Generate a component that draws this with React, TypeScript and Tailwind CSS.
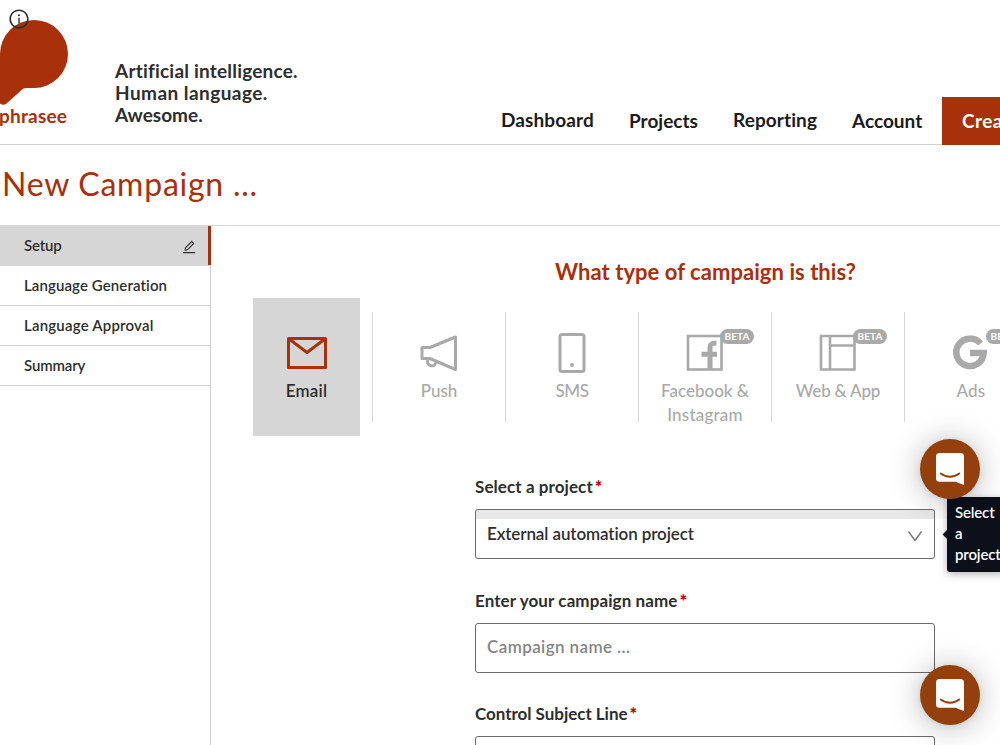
import type { ReactNode } from "react";
import { AiOutlineEdit, AiOutlineInfoCircle } from "react-icons/ai";

function Logo() {
  return (
    <div className="relative h-full w-[68px] shrink-0">
      <svg className="absolute left-0 top-5" width="68" height="86" viewBox="0 0 68 86" fill="#a8300a">
        <path d="M34 0a34 34 0 0 1 0 68h-7c-3 0-4 .6-6.500 3L6.500 83.500C4.500 85.300 2 85 0 83.500V34A34 34 0 0 1 34 0Z" />
      </svg>
      <AiOutlineInfoCircle className="absolute left-[8px] top-[8px] text-[#2e2e2e]" size={22} />
      <div className="absolute -left-px top-[104px] text-[19px] leading-6 font-bold tracking-[0.2px] text-[#a8300a]">phrasee</div>
    </div>
  );
}

function Beta() {
  return (
    <span className="absolute left-[81px] top-[17px] h-[15px] w-[34px] rounded-full bg-[#a9a9a9] text-center text-[10px] leading-[15px] font-bold tracking-[0.1px] text-white">
      BETA
    </span>
  );
}

function Channel({ icon, beta, children }: { icon: ReactNode; beta?: boolean; children: ReactNode }) {
  return (
    <div className="relative mt-[14px] h-[110px] w-[133px] shrink-0 border-l border-[#d6d6d6] pt-5 text-center text-[17px] leading-6 font-medium text-[#a9a9a9]">
      <div className="mb-[5px] flex h-[42px] justify-center">{icon}</div>
      {beta && <Beta />}
      {children}
    </div>
  );
}

function Label({ children, className }: { children: ReactNode; className: string }) {
  return (
    <div className={`flex h-6 items-center text-[17px] leading-6 font-bold text-[#2e2e2e] ${className}`}>
      <span className="-mt-[2px]">{children}</span>
      <span className="ml-[2px] -mt-[2px] text-[18px] font-black tracking-normal text-[#a80f0a]">*</span>
    </div>
  );
}

function ChatButton() {
  return (
    <div className="flex size-[60px] items-center justify-center rounded-full bg-[#94400c] shadow-[0_1px_6px_rgba(0,0,0,0.08),0_2px_32px_rgba(0,0,0,0.28)]">
      <svg width="28" height="32" viewBox="0 0 28 32">
        <path d="M3.500 0h21A3.500 3.500 0 0 1 28 3.500V32c0 0-4.500-1.300-8-3.200H3.500A3.500 3.500 0 0 1 0 25.300V3.500A3.500 3.500 0 0 1 3.500 0Z" fill="#fff" />
        <path d="M4.700 20.500c5.600 4.300 13 4.300 18.600 0" fill="none" stroke="#94400c" strokeWidth="1.800" strokeLinecap="round" />
      </svg>
    </div>
  );
}

const iconProps = { width: 40, height: 42, viewBox: "0 0 40 42", fill: "none", stroke: "#a9a9a9", strokeWidth: 3 };

export default function App() {
  return (
    <div className="relative h-[745px] w-[1000px] overflow-hidden bg-white font-['Lato',sans-serif] text-[#2e2e2e]">
      <header className="flex h-[145px] border-b border-[#cfcfcf]">
        <Logo />
        <div className="ml-[47px] w-[386px] shrink-0 pt-[60px] text-[19px] leading-[22px] font-bold">
          <div className="tracking-[0.2px]">Artificial intelligence.</div>
          <div className="tracking-[0.45px]">Human language.</div>
          <div>Awesome.</div>
        </div>
        <nav className="-mb-px flex shrink-0 whitespace-nowrap text-[19px] leading-6 font-bold text-[#1c1c1c]">
          <a className="w-[128px] pt-[108px] tracking-[0.1px]">Dashboard</a>
          <a className="w-[104px] pt-[109px]">Projects</a>
          <a className="w-[119px] pt-[108px] tracking-[0.1px]">Reporting</a>
          <a className="w-[90px] pt-[109px]">Account</a>
          <a className="mt-[97px] h-12 w-[120px] bg-[#a8300a] pl-5 pt-3 tracking-[0.4px] text-white">Create</a>
        </nav>
      </header>

      <h1 className="h-20 pl-[2px] pt-[15px] text-[32px] leading-[48px] font-normal tracking-[0.75px] text-[#a8300a]">New Campaign ...</h1>

      <div className="flex h-[520px] border-t border-[#d6d6d6]">
        <aside className="w-[211px] shrink-0 border-r border-[#d0d0d0] text-[15px] font-semibold">
          <div className="-mr-px flex h-10 items-center justify-between border-b border-[#d6d6d6] bg-[#d6d6d6]">
            <span className="pl-6 tracking-[-0.2px]">Setup</span>
            <div className="flex h-[39px] items-center border-r-[3px] border-[#a8300a] pr-[11px] pt-[2px]">
              <AiOutlineEdit size={16} />
            </div>
          </div>
          <div className="h-10 border-b border-[#d0d0d0] pl-6 leading-[38px] tracking-[0.1px]">Language Generation</div>
          <div className="h-10 border-b border-[#d0d0d0] pl-6 leading-[38px] tracking-[0.2px]">Language Approval</div>
          <div className="h-10 border-b border-[#d0d0d0] pl-6 leading-[38px] tracking-[-0.15px]">Summary</div>
        </aside>

        <main className="w-[989px] shrink-0">
          <h2 className="mt-[30px] text-center text-[22px] leading-8 font-bold tracking-[0.05px] text-[#a8300a]">What type of campaign is this?</h2>

          <div className="mt-[10px] flex pl-[42px]">
            <div className="mr-3 h-[138px] w-[107px] shrink-0 bg-[#d6d6d6] pt-[34px] text-center text-[17px] leading-6 font-semibold tracking-[0.2px]">
              <div className="mb-[5px] flex h-[42px] justify-center">
                <svg {...iconProps} stroke="#a8300a" strokeLinejoin="round">
                  <path d="M1.500 6.500h37v29h-37ZM1.500 6.500L20 20.500 38.500 6.500" />
                </svg>
              </div>
              Email
            </div>
            <Channel icon={
              <svg {...iconProps}>
                <path d="M3 15.500h8L36.500 5v32.500L11 26.500h-8ZM9 27.500a4.300 4.300 0 1 0 8 1.500" strokeLinejoin="round" />
              </svg>
            }>Push</Channel>
            <Channel icon={
              <svg {...iconProps}>
                <rect x="8" y="2.500" width="24" height="37" rx="2" />
                <circle cx="20" cy="33" r="2" fill="#a9a9a9" stroke="none" />
              </svg>
            }><span className="tracking-[-0.5px]">SMS</span></Channel>
            <Channel beta icon={
              <svg {...iconProps}>
                <rect x="3" y="4" width="33.500" height="33.500" strokeWidth="2.600" />
                <path d="M25 38V15.500c0-3.300 1.500-4.500 6.500-4.500M16.500 22.300H32" strokeWidth="5" />
              </svg>
            }><div>Facebook &amp;</div><div className="tracking-[0.2px]">Instagram</div></Channel>
            <Channel beta icon={
              <svg {...iconProps} strokeWidth="2.600">
                <path d="M3 4h33.500v33.500h-33.500ZM12 4v33.500M12 13.500h24" />
              </svg>
            }><span className="tracking-[-0.2px]">Web &amp; App</span></Channel>
            <Channel beta icon={
              <svg {...iconProps} strokeWidth="6.500">
                <path d="M29.500 11.500A13.700 13.700 0 1 0 32.700 21H19" />
              </svg>
            }><span className="tracking-[0.2px]">Ads</span></Channel>
          </div>

          <form className="ml-[264px] w-[460px] pt-[40px]">
            <Label className="tracking-[0.08px]">Select a project</Label>
            <div className="mt-[9px] flex h-[50px] items-center justify-between rounded-[3px] border border-[#6b6b6b] bg-[linear-gradient(#e8e8e8_9px,transparent_9px)] px-[11px] text-[17px] font-semibold tracking-[-0.1px]">
              External automation project
              <svg className="mt-[3px]" width="16" height="12" viewBox="0 0 16 12" fill="none" stroke="#777" strokeWidth="1.400"><path d="M1.500 1.500L8 10.500 14.500 1.500" /></svg>
            </div>
            <Label className="mt-[31px] tracking-[0.1px]">Enter your campaign name</Label>
            <div className="mt-[9px] h-[50px] rounded-[3px] border border-[#6b6b6b] px-[11px] text-[17px] leading-[46px] font-semibold tracking-[0.4px] text-[#858585]">Campaign name ...</div>
            <Label className="mt-[30px] tracking-[-0.03px]">Control Subject Line</Label>
            <div className="mt-[9px] h-[50px] rounded-[3px] border border-[#6b6b6b]" />
          </form>
        </main>
      </div>

      <div className="absolute left-[947px] top-[497px] h-[75px] w-[60px] rounded-[3px] bg-[#0b101b] pl-2 pt-[5px] text-[15px] leading-[21px] font-semibold tracking-[-0.15px] text-white shadow-[0_2px_8px_rgba(0,0,0,0.3)]">
        <span className="absolute -left-[3px] top-[34px] size-[7px] rotate-45 bg-[#0b101b]" />
        <div>Select</div>
        <div>a</div>
        <div>project</div>
      </div>
      <div className="absolute left-[860px] top-[380px] h-[139px] w-[140px] overflow-hidden pl-[60px] pt-[59px]">
        <ChatButton />
      </div>
      <div className="absolute left-[920px] top-[665px]">
        <ChatButton />
      </div>
    </div>
  );
}
